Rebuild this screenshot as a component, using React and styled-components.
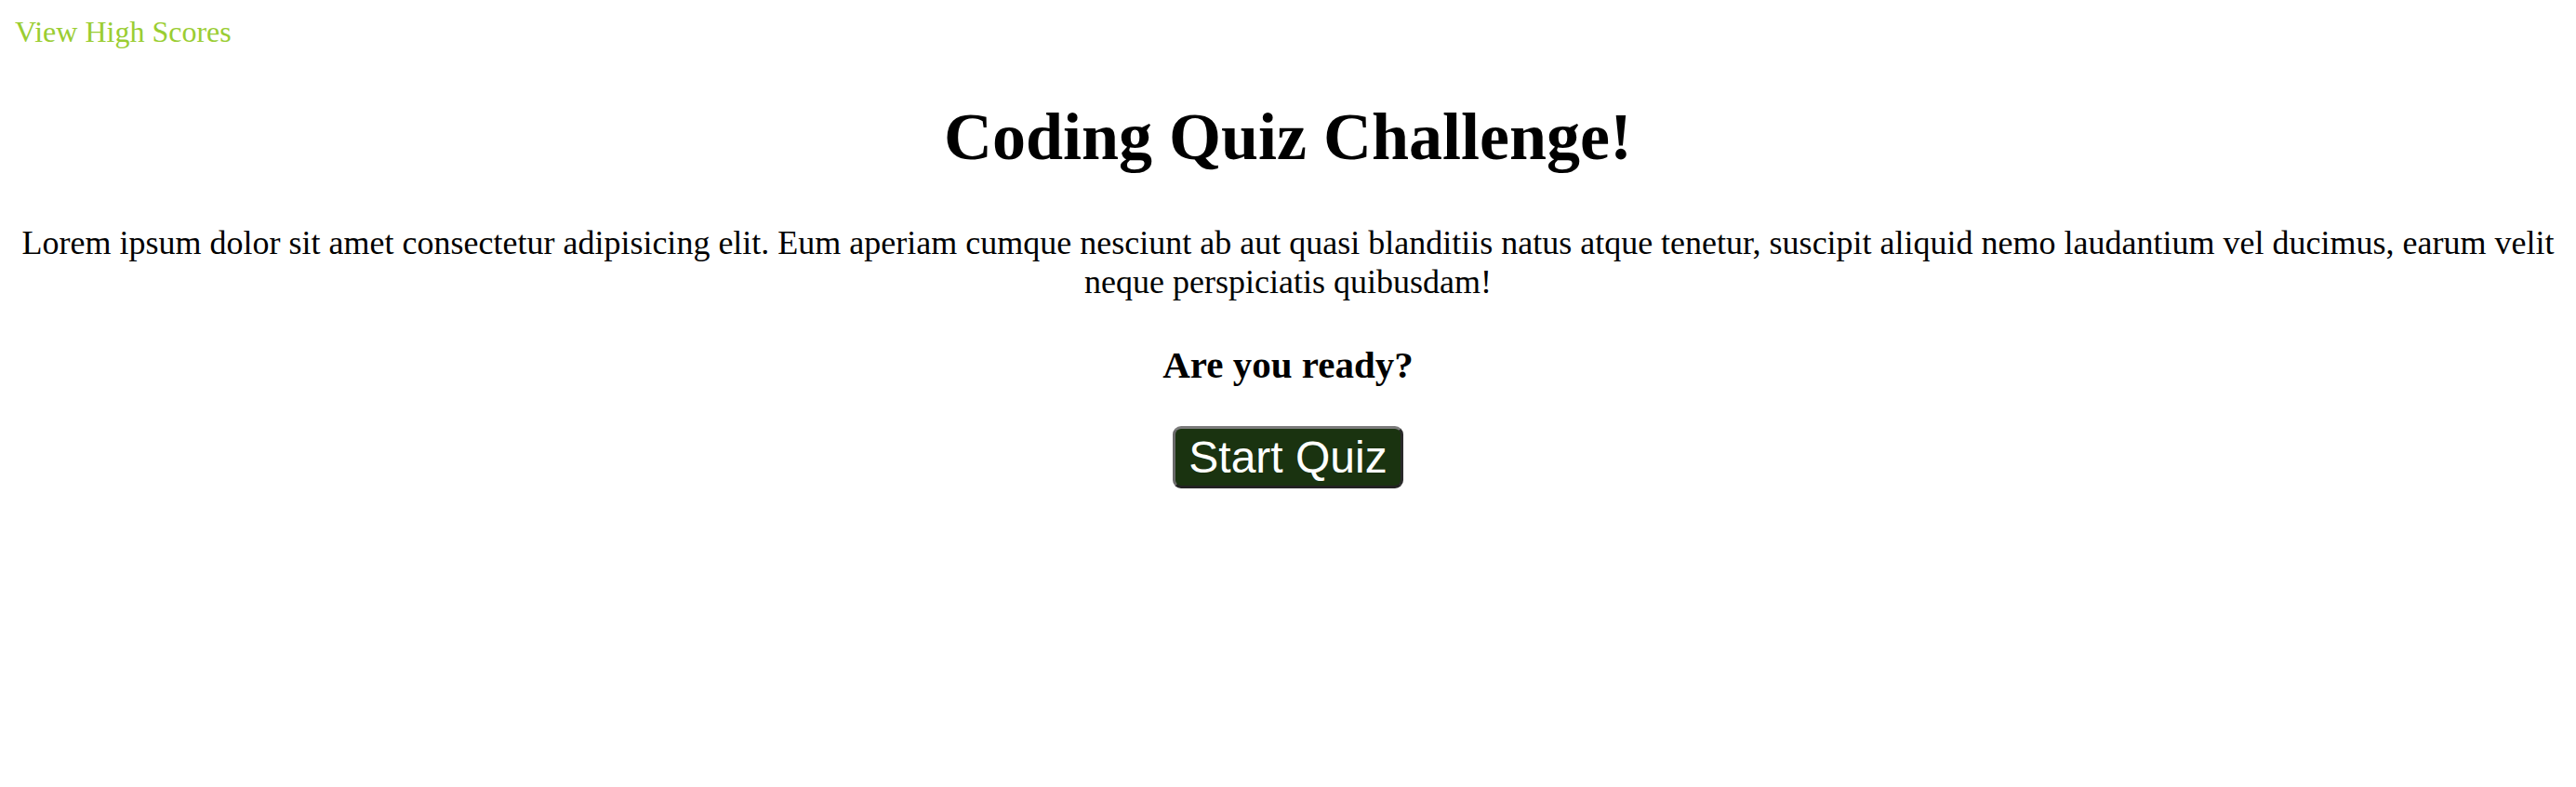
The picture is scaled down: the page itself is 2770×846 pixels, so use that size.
import React from 'react'
import styled, { createGlobalStyle } from 'styled-components'

const GlobalStyle = createGlobalStyle`
  body {
    margin: 16px;
    font-family: "Liberation Serif", "Times New Roman", serif;
    color: #000;
    background: #fff;
  }
`;

export default function App() {
  return (
    <>
      <GlobalStyle />
      <HighScoresLink href="#">View High Scores</HighScoresLink>
      <Intro>
        <Title>Coding Quiz Challenge!</Title>
        <Blurb>
          Lorem ipsum dolor sit amet consectetur adipisicing elit. Eum aperiam cumque nesciunt ab aut quasi blanditiis natus atque tenetur, suscipit aliquid nemo laudantium vel ducimus, earum velit neque perspiciatis quibusdam!
        </Blurb>
        <Ready>Are you ready?</Ready>
        <StartButton>Start Quiz</StartButton>
      </Intro>
    </>
  )
}

const HighScoresLink = styled.a`
  font-size: 32px;
  color: #9acd32;
  text-decoration: none;
`;

const Intro = styled.section`
  text-align: center;
`;

const Title = styled.h1`
  font-size: 72px;
  font-weight: bold;
  margin: 53px 0 51px;
`;

const Blurb = styled.p`
  font-size: 36px;
  margin: 36px 0 44px;
`;

const Ready = styled.h3`
  font-size: 41px;
  font-weight: bold;
  margin: 44px 0 42px;
`;

const StartButton = styled.button`
  font-family: "Liberation Sans", Arial, sans-serif;
  font-size: 48px;
  color: #fff;
  background: #1a3310;
  border: 3px solid;
  border-color: #7a7a7a #2a2a2a #222 #6a6a6a;
  border-radius: 9px;
  padding: 3px 14px;
  cursor: pointer;
`;
